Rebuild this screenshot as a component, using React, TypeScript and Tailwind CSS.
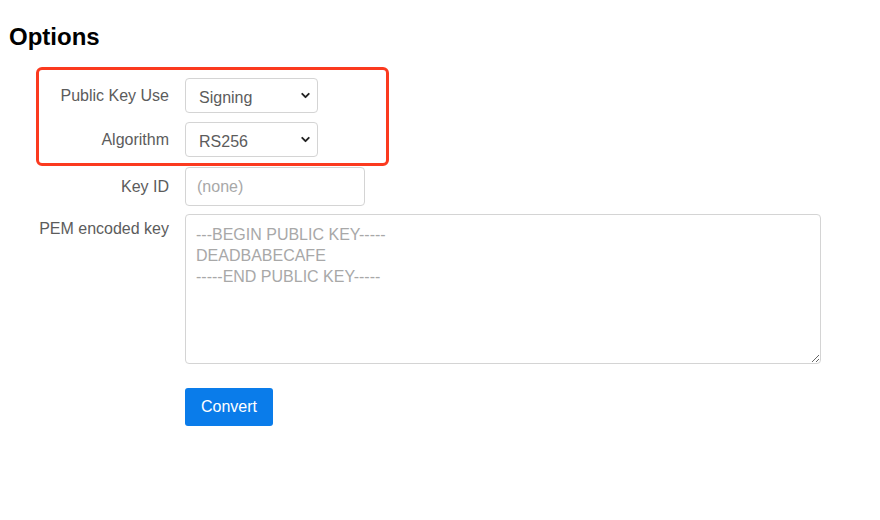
import { ChevronDown } from 'lucide-react';

const font = { fontFamily: '"Liberation Sans", Arial, sans-serif' };

function Row({ label, top, children }: { label: string; top?: boolean; children: React.ReactNode }) {
  return (
    <div className={`flex ${top ? 'items-start' : 'items-center'}`}>
      <label className={`w-[169px] shrink-0 text-right text-[16px] text-[#5c5c5c] ${top ? 'pt-[3px]' : ''}`}>
        {label}
      </label>
      <div className="ml-4">{children}</div>
    </div>
  );
}

function Select({ value, options }: { value: string; options: string[] }) {
  return (
    <div className="relative w-[133px]">
      <select
        defaultValue={value}
        className="h-[35px] w-full appearance-none rounded-[4px] border border-[#d4d4d4] bg-white pl-[13px] pt-[4px] text-[16px] text-[#5c5c5c] outline-none"
        style={font}
      >
        {options.map((o) => (
          <option key={o}>{o}</option>
        ))}
      </select>
      <ChevronDown
        className="pointer-events-none absolute right-[6px] top-[11px] h-[13px] w-[13px] text-[#222]"
        strokeWidth={3.5}
      />
    </div>
  );
}

export default function App() {
  return (
    <div className="relative min-h-[520px] w-[880px] bg-white" style={font}>
      <h2 className="ml-[9px] pt-[21px] text-[24px] font-bold leading-[32px] text-black">Options</h2>

      <form className="mt-[25px] flex flex-col">
        <Row label="Public Key Use">
          <Select value="Signing" options={['Signing', 'Encryption']} />
        </Row>
        <div className="mt-[9px]">
          <Row label="Algorithm">
            <Select value="RS256" options={['RS256', 'RS384', 'RS512', 'ES256']} />
          </Row>
        </div>
        <div className="mt-[10px]">
          <Row label="Key ID">
            <input
              placeholder="(none)"
              className="h-[39px] w-[180px] rounded-[4px] border border-[#d4d4d4] bg-white px-[11px] text-[16px] text-[#5c5c5c] outline-none placeholder:text-[#a8a8a8]"
              style={font}
            />
          </Row>
        </div>
        <div className="mt-[8px]">
          <Row label="PEM encoded key" top>
            <textarea
              placeholder={'---BEGIN PUBLIC KEY-----\nDEADBABECAFE\n-----END PUBLIC KEY-----'}
              className="block h-[150px] w-[636px] rounded-[4px] border border-[#d4d4d4] bg-white px-[10px] py-[9px] text-[16px] leading-[21px] text-[#5c5c5c] outline-none placeholder:text-[#a8a8a8]"
              style={font}
            />
          </Row>
        </div>
        <div className="ml-[185px] mt-[24px]">
          <button
            type="button"
            className="h-[38px] w-[88px] rounded-[3px] bg-[#0a7cea] text-[16px] text-white"
            style={font}
          >
            Convert
          </button>
        </div>
      </form>

      {/* annotation box around the first two rows */}
      <div className="pointer-events-none absolute left-[36px] top-[67px] h-[99px] w-[353px] rounded-[6px] border-[3px] border-[#fb3a1f]" />
    </div>
  );
}
